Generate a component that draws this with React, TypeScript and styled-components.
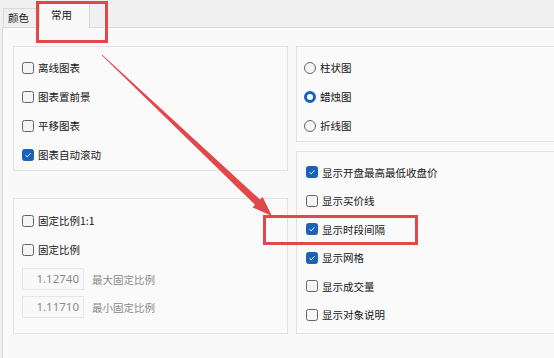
import React from 'react';
import styled, { createGlobalStyle } from 'styled-components';

const GlobalStyle = createGlobalStyle`
    html, body {
        margin: 0;
        padding: 0;
        background: #f0f0f0;
    }
    body {
        font-family: "Noto Sans CJK SC", "Noto Sans", sans-serif;
        font-size: 10.5px;
        color: #161616;
    }
`;

const Window = styled.div`
    position: relative;
    width: 554px;
    height: 358px;
    overflow: hidden;
    display: flex;
    flex-direction: column;
`;

const TabStrip = styled.div`
    display: flex;
    align-items: flex-end;
    height: 27px;
    padding-left: 1px;
    margin-left: 2px;
`;

const Tab = styled.div<{ $active?: boolean }>`
    box-sizing: border-box;
    display: flex;
    align-items: center;
    height: ${p => (p.$active ? '25px' : '19px')};
    padding: ${p => (p.$active ? '0 17px 4px 11px' : '0 10px 1px 4px')};
    background: ${p => (p.$active ? '#f9f9f9' : '#f0f0f0')};
    border: 1px solid #dadada;
    border-bottom: none;
    margin-bottom: ${p => (p.$active ? '-1px' : '0')};
    margin-left: ${p => (p.$active ? '-1px' : '0')};
    position: relative;
    z-index: ${p => (p.$active ? 1 : 0)};
`;

const Content = styled.div`
    flex: 1;
    margin-left: 2px;
    border-top: 1px solid #dadada;
    border-left: 1px solid #dadada;
    background: #f9f9f9;
    padding: 18px 0 0 10px;
    display: grid;
    grid-template-columns: 275px 275px;
    column-gap: 8px;
    align-items: start;
`;

const Column = styled.div<{ $gap: number }>`
    display: flex;
    flex-direction: column;
    gap: ${p => p.$gap}px;
    height: 288px;
`;

const GroupBox = styled.div<{ $pad?: string; $grow?: boolean }>`
    box-sizing: border-box;
    border: 1px solid #e2e2e2;
    background: #fafafa;
    padding: ${p => p.$pad || '6px 8px 1px 8px'};
    display: flex;
    flex-direction: column;
    flex: ${p => (p.$grow ? 1 : 'none')};
`;

const Row = styled.label<{ $h?: number }>`
    display: flex;
    align-items: center;
    gap: 4px;
    height: ${p => p.$h ?? 29}px;
    white-space: nowrap;
`;

const Box = styled.span<{ $on?: boolean }>`
    box-sizing: border-box;
    width: 12px;
    height: 12px;
    border-radius: 2.5px;
    border: 1px solid ${p => (p.$on ? '#1a62b8' : '#646464')};
    background: ${p => (p.$on ? '#1a62b8' : '#f5f5f5')};
    display: flex;
    align-items: center;
    justify-content: center;
    flex: none;
`;

const Radio = styled.span<{ $on?: boolean }>`
    box-sizing: border-box;
    width: 12px;
    height: 12px;
    border-radius: 50%;
    border: ${p => (p.$on ? '3.5px solid #1a62b8' : '1px solid #646464')};
    background: ${p => (p.$on ? '#ffffff' : '#f5f5f5')};
    flex: none;
    margin-left: -1px;
`;

const InputRow = styled.div<{ $top?: number }>`
    display: flex;
    align-items: center;
    gap: 8px;
    margin-top: ${p => p.$top ?? 6}px;
    color: #8a8a8a;
`;

const NumberBox = styled.div`
    box-sizing: border-box;
    width: 62px;
    height: 22px;
    border: 1px solid #e6e6e6;
    background: #f9f9f9;
    text-align: right;
    padding-right: 4px;
    line-height: 20px;
    font-size: 11.5px;
    font-family: "Noto Sans", sans-serif;
    color: #8a8a8a;
`;

const Frame = styled.div<{ $x: number; $y: number; $w: number; $h: number }>`
    position: absolute;
    left: ${p => p.$x}px;
    top: ${p => p.$y}px;
    width: ${p => p.$w}px;
    height: ${p => p.$h}px;
    box-sizing: border-box;
    border: 3px solid #e2474b;
    pointer-events: none;
    z-index: 5;
`;

const ArrowLayer = styled.svg`
    position: absolute;
    left: 0;
    top: 0;
    z-index: 6;
    pointer-events: none;
`;

function Check({ on, label, h }: { on?: boolean; label: string; h?: number }) {
    return (
        <Row $h={h}>
            <Box $on={on}>
                {on && (
                    <svg width="8" height="8" viewBox="0 0 8 8">
                        <path d="M1.5 4.2 L3.2 5.8 L6.5 2.3" fill="none" stroke="#fff" strokeWidth="1" />
                    </svg>
                )}
            </Box>
            {label}
        </Row>
    );
}

function Option({ on, label }: { on?: boolean; label: string }) {
    return (
        <Row>
            <Radio $on={on} />
            {label}
        </Row>
    );
}

export default function App() {
    return (
        <Window>
            <GlobalStyle />
            <TabStrip>
                <Tab>颜色</Tab>
                <Tab $active>常用</Tab>
            </TabStrip>
            <Content>
                <Column $gap={27}>
                    <GroupBox>
                        <Check label="离线图表" />
                        <Check label="图表置前景" />
                        <Check label="平移图表" />
                        <Check on label="图表自动滚动" />
                    </GroupBox>
                    <GroupBox $grow $pad="7px 8px 0 8px">
                        <Check label="固定比例1:1" />
                        <Check label="固定比例" />
                        <InputRow $top={4}>
                            <NumberBox>1.12740</NumberBox>
                            最大固定比例
                        </InputRow>
                        <InputRow>
                            <NumberBox>1.11710</NumberBox>
                            最小固定比例
                        </InputRow>
                    </GroupBox>
                </Column>
                <Column $gap={9}>
                    <GroupBox>
                        <Option label="柱状图" />
                        <Option on label="蜡烛图" />
                        <Option label="折线图" />
                    </GroupBox>
                    <GroupBox $grow $pad="6px 9px 0 9px">
                        <Check on h={28.5} label="显示开盘最高最低收盘价" />
                        <Check h={28.5} label="显示买价线" />
                        <Check on h={28.5} label="显示时段间隔" />
                        <Check on h={28.5} label="显示网格" />
                        <Check h={28.5} label="显示成交量" />
                        <Check h={28.5} label="显示对象说明" />
                    </GroupBox>
                </Column>
            </Content>

            <Frame $x={36} $y={1} $w={72} $h={42} />
            <Frame $x={263} $y={215} $w={155} $h={30} />
            <ArrowLayer width="554" height="358" viewBox="0 0 554 358">
                <polygon
                    fill="#e2474b"
                    points="101.7,55.3 102.3,54.7 260,199.6 262.6,197 272,216 252.6,207.4 255,204.8"
                />
            </ArrowLayer>
        </Window>
    );
}
